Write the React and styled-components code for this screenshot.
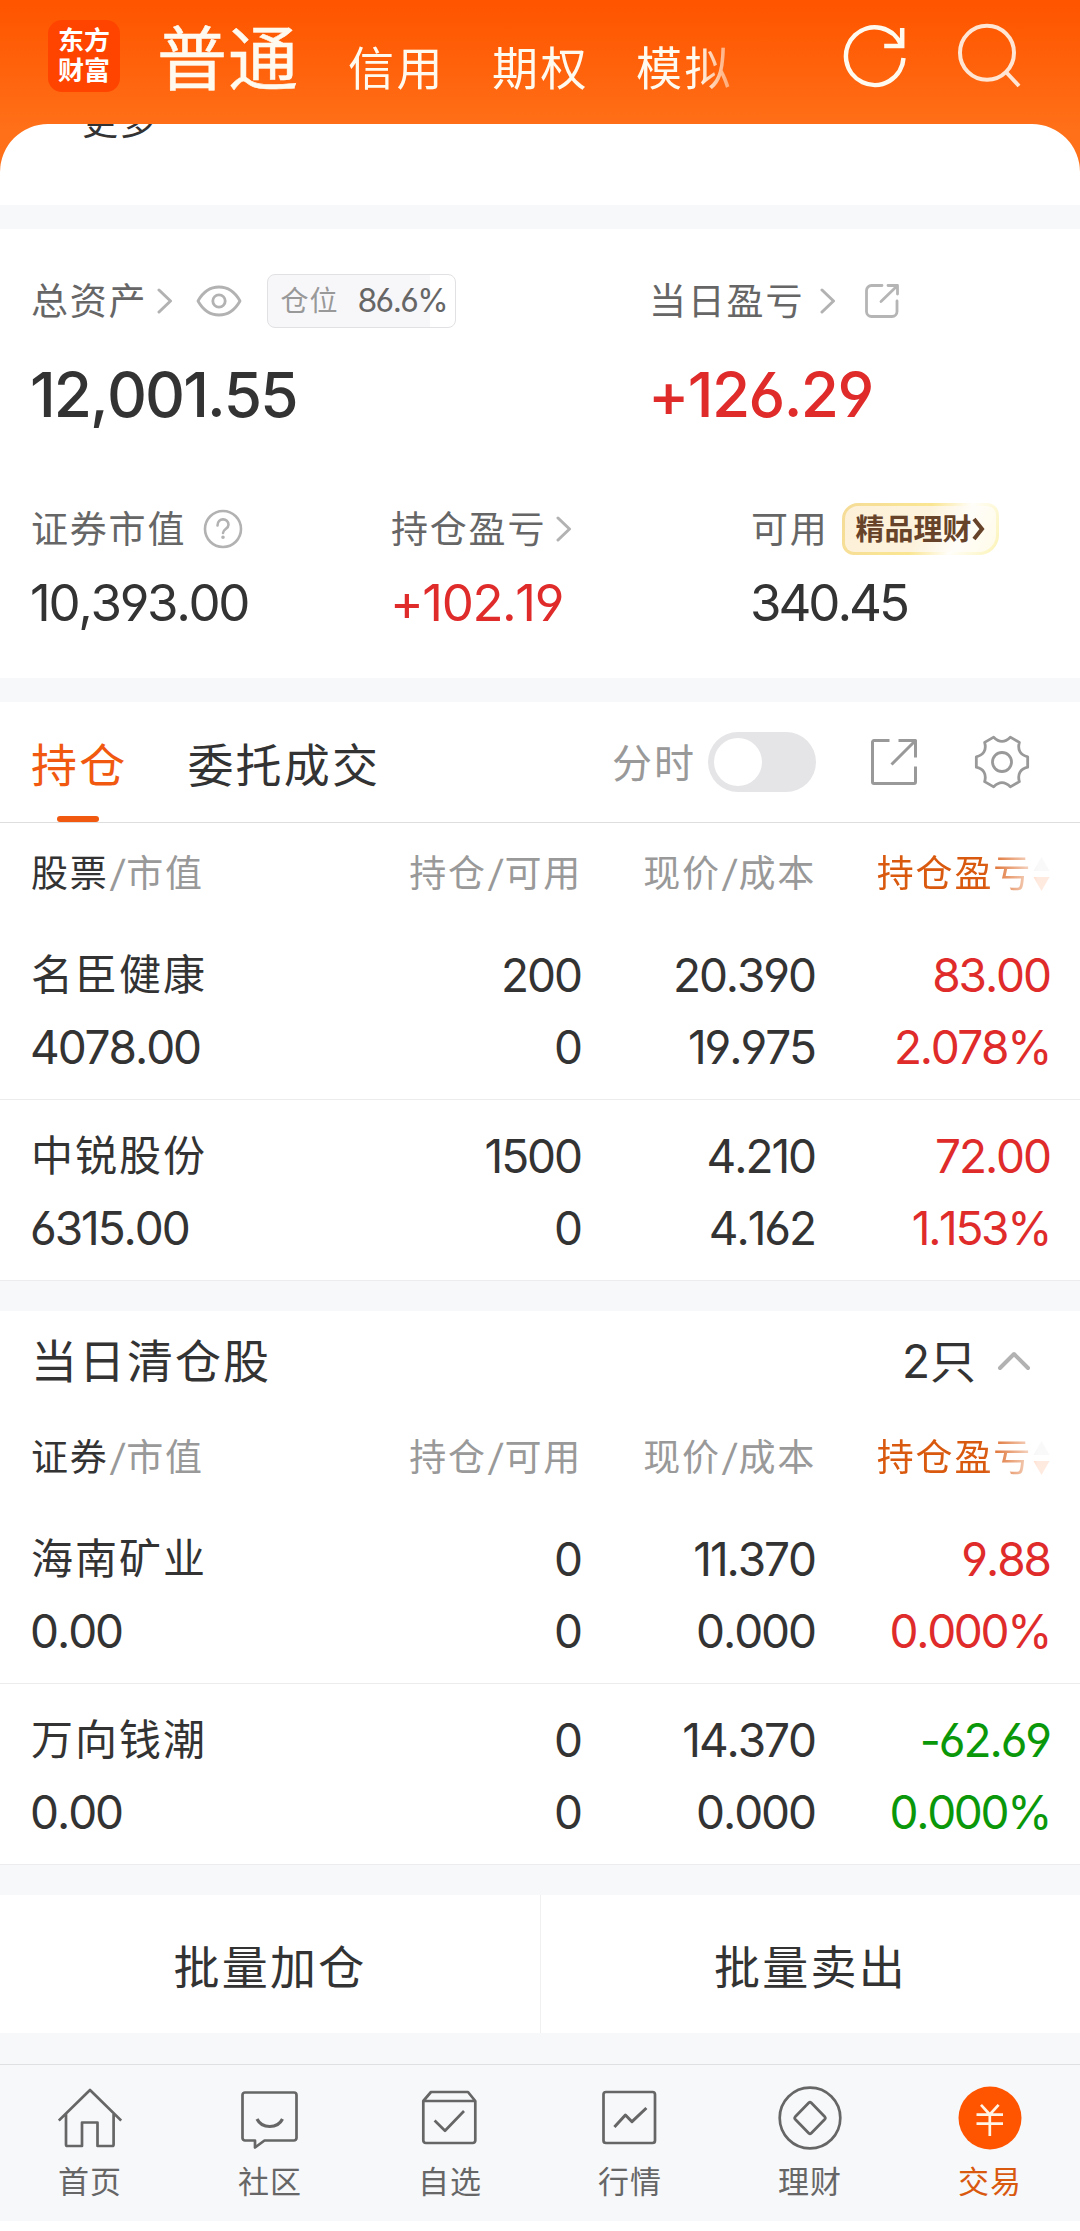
import React from 'react';
import styled, { createGlobalStyle } from 'styled-components';

const Global = createGlobalStyle`
  * { box-sizing: border-box; }
  body {
    margin: 0;
    background: #fff;
    color: #333;
    font-family: Inter, "Noto Sans CJK SC", sans-serif;
    font-feature-settings: "cv03", "cv04";
    font-kerning: none;
  }
  svg { display: block; flex: none; }
`;

const Page = styled.div`
  width: 1080px;
  height: 2231px;
  overflow: hidden;
  display: flex;
  flex-direction: column;
  > * { flex: none; }
`;

const Top = styled.header`
  height: 205px;
  background: linear-gradient(#ff5400 0, #ff5a04 30px, #ff7018 130px);
`;
const TopBar = styled.div`
  height: 124px;
  display: flex;
  align-items: flex-start;
  padding-left: 48px;
`;
const Logo = styled.div`
  width: 72px;
  height: 72px;
  margin-top: 20px;
  padding-top: 6px;
  border-radius: 14px;
  background: #ff4400;
  color: #fff;
  text-align: center;
  font-size: 26px;
  font-weight: 700;
  line-height: 30px;
`;
const TopTabs = styled.nav`
  display: flex;
  align-items: baseline;
  width: 600px;
  margin-left: 37px;
  padding-top: 14px;
  color: #fffaf0;
  white-space: nowrap;
  mask-image: linear-gradient(to right, #000 540px, transparent 600px);
`;
const TopTab = styled.span`
  font-size: ${p => (p.$active ? 70 : 46)}px;
  line-height: 92px;
  letter-spacing: ${p => (p.$active ? 1 : 2.5)}px;
  margin-right: ${p => (p.$active ? 49 : 47)}px;
  -webkit-text-stroke: ${p => (p.$active ? '0.5px #fffaf0' : '0')};
`;
const TopIcons = styled.div`
  display: flex;
  align-items: flex-start;
  gap: 50px;
  margin: 22px 0 0 86px;
`;
const Sheet = styled.div`
  height: 81px;
  padding-left: 82px;
  overflow: hidden;
  border-radius: 48px 48px 0 0;
  background: #fff;
`;
const More = styled.div`
  margin-top: -29px;
  font-size: 36px;
  line-height: 54px;
  letter-spacing: 1.5px;
`;
const Gap = styled.div`
  height: ${p => p.$h}px;
  background: #f7f8fa;
`;

const Assets = styled.section`
  height: 449px;
  padding: 42px 0 0 31px;
`;
const AssetRow = styled.div`
  display: grid;
  grid-template-columns: ${p => p.$cols};
  margin-bottom: ${p => p.$mb || 0}px;
`;
const Label = styled.div`
  display: flex;
  align-items: center;
  height: 60px;
  color: #666;
  font-size: 37px;
  letter-spacing: 1.8px;
  line-height: 60px;
  white-space: nowrap;
`;
const LabelText = styled.span`
  padding-top: 1px;
`;
const Slot = styled.span`
  display: flex;
  margin-left: ${p => p.$l}px;
`;
const tone = { up: '#e02b2b', down: '#0a980a' };
const Value = styled.div`
  height: ${p => (p.$big ? 76 : 60)}px;
  margin-top: ${p => (p.$big ? 26 : 14)}px;
  line-height: ${p => (p.$big ? 76 : 60)}px;
  font-size: ${p => (p.$big ? 62 : 51)}px;
  font-weight: ${p => (p.$big ? 500 : 400)};
  letter-spacing: ${p => p.$ls}em;
  margin-left: -1px;
  color: ${p => tone[p.$tone] || '#333'};
`;
const Ratio = styled.div`
  display: flex;
  align-items: center;
  width: 189px;
  height: 54px;
  margin-left: 25px;
  padding-left: 12px;
  border: 1px solid #e1e1e3;
  border-radius: 8px;
  background: linear-gradient(to right, #f7f7fa 86.6%, #fff 86.6%);
  font-size: 28px;
  letter-spacing: 1px;
  line-height: 52px;
  color: #999;
`;
const RatioValue = styled.span`
  margin-left: 19px;
  font-size: 32px;
  letter-spacing: -0.05em;
  color: #666;
`;
const Promo = styled.div`
  display: flex;
  align-items: center;
  width: 157px;
  height: 52px;
  margin-left: 13px;
  padding-left: 11px;
  border: 3px solid transparent;
  border-radius: 16px 12px 20px 12px;
  background:
    linear-gradient(115deg, #fdf0d8 0%, #fdf3dc 50%, #fffdf8 75%, #fffbe9 100%) padding-box,
    linear-gradient(115deg, #f5dc98 0%, #fae692 50%, #fffefa 72%, #fcf3b4 100%) border-box;
  color: #67432a;
  font-size: 29px;
  font-weight: 700;
  letter-spacing: 0;
  line-height: 46px;
`;
const PromoText = styled.span`
  padding-top: 2px;
`;

const TabBar = styled.div`
  display: flex;
  align-items: center;
  height: 121px;
  padding-left: 31px;
  border-bottom: 1px solid #dededf;
`;
const Tab = styled.div`
  display: flex;
  flex-direction: column;
  align-items: center;
  height: 120px;
  padding-top: 33px;
  margin-right: 60px;
  font-size: 46px;
  line-height: 60px;
  letter-spacing: 2.2px;
  color: ${p => (p.$active ? '#f0590f' : '#333')};
  &::after {
    content: '';
    width: 42px;
    height: 6px;
    margin: auto 2px 0 0;
    border-radius: 3px;
    background: ${p => (p.$active ? '#f0590f' : 'transparent')};
  }
`;
const Tools = styled.div`
  display: flex;
  align-items: center;
  margin-left: auto;
  padding-right: 50px;
  color: #999;
  font-size: 40px;
  letter-spacing: 2px;
  line-height: 60px;
`;
const ToolLabel = styled.span`
  padding-top: 3px;
`;
const Switch = styled.div`
  width: 108px;
  height: 60px;
  margin: 0 55px 0 12px;
  padding: 6px;
  border-radius: 30px;
  background: #e5e5e7;
  &::before {
    content: '';
    display: block;
    width: 48px;
    height: 48px;
    border-radius: 50%;
    background: #fff;
  }
`;

const Line = styled.div`
  display: grid;
  grid-template-columns: 550px 234px 235px;
  padding-left: 31px;
  text-align: right;
  white-space: nowrap;
`;
const HeadLine = styled(Line)`
  height: 96px;
  padding: 21px 0 0 31px;
  grid-template-columns: 551px 234px 234px;
  font-size: 37px;
  line-height: 60px;
  letter-spacing: 1.8px;
  color: #999;
`;
const HeadFirst = styled.span`
  display: flex;
  justify-content: space-between;
  b { font-weight: 400; color: #333; }
`;
const Slash = styled.span`
  display: inline-block;
  margin: 0 0.5px 0 2px;
  transform: skewX(-7deg);
`;
const SortHead = styled.span`
  display: flex;
  align-items: center;
  justify-content: flex-end;
  gap: 1px;
  height: 60px;
  color: #d9590f;
  mask-image: linear-gradient(to right, #000 168px, rgba(0, 0, 0, 0.12) 222px);
`;
const StockRow = styled.div`
  height: 181px;
  padding-top: 20px;
  border-bottom: 1px solid #ececee;
`;
const StockLine = styled(Line)`
  height: 72px;
  font-size: 46px;
  line-height: 72px;
  letter-spacing: -0.045em;
`;
const FirstCell = styled.span`
  display: flex;
  justify-content: space-between;
`;
const Amount = styled.span`
  margin-left: -1px;
`;
const StockName = styled.span`
  font-size: 42px;
  letter-spacing: 2px;
`;
const Gain = styled.span`
  color: ${p => tone[p.$tone]};
  letter-spacing: ${p => (p.$rate ? '-0.051em' : 'inherit')};
`;

const CloseHead = styled.div`
  display: flex;
  align-items: center;
  justify-content: space-between;
  height: 96px;
  padding: 3px 49px 0 31px;
  font-size: 46px;
  line-height: 60px;
  letter-spacing: 2px;
`;
const Count = styled.span`
  display: flex;
  align-items: center;
  letter-spacing: 0;
  svg { margin-left: 21px; }
`;

const Actions = styled.div`
  display: grid;
  grid-template-columns: 1fr 1fr;
  height: 138px;
`;
const Action = styled.button`
  border: 0;
  border-left: ${p => (p.$divided ? '1px solid #f0f0f2' : '0')};
  padding: 0 0 1px;
  background: #fff;
  color: #333;
  font: inherit;
  font-size: 46px;
  letter-spacing: 2.2px;
`;

const BottomNav = styled.nav`
  display: grid;
  grid-template-columns: repeat(6, 1fr);
  height: 157px;
  border-top: 1px solid #dfe0e2;
  background: #f7f8fa;
`;
const NavItem = styled.div`
  display: flex;
  flex-direction: column;
  align-items: center;
  padding-top: 21px;
  font-size: 31px;
  line-height: 40px;
  letter-spacing: 1px;
  color: ${p => (p.$active ? '#d9590f' : '#666')};
  svg { margin-right: 1px; }
  span { margin-top: 12px; }
`;

const Chevron = () => (
  <svg width="16" height="26" viewBox="0 0 16 26" fill="none" stroke="#b2b2b2" strokeWidth="3" strokeLinecap="round" strokeLinejoin="round">
    <path d="M2 2 13.5 13 2 24" />
  </svg>
);
const Eye = () => (
  <svg width="46" height="32" viewBox="0 0 46 32" fill="none" stroke="#b2b2b2" strokeWidth="2.8">
    <path d="M2 16C7 7 14 2 23 2s16 5 21 14C39 25 32 30 23 30S7 25 2 16Z" strokeLinejoin="round" />
    <circle cx="23" cy="16" r="6.2" />
  </svg>
);
const Help = () => (
  <svg width="40" height="40" viewBox="0 0 40 40" fill="none" stroke="#b2b2b2" strokeWidth="2.6" strokeLinecap="round">
    <circle cx="20" cy="20" r="18" />
    <path d="M14.5 16.5c0-8 11-8 11-.8 0 4.3-5.5 4.3-5.5 8.3" />
    <circle cx="20" cy="28.3" r="1" fill="#b2b2b2" strokeWidth="1.6" />
  </svg>
);
const ShareSmall = () => (
  <svg width="34" height="34" viewBox="0 0 34 34" fill="none" stroke="#b5b5b5" strokeWidth="2.8" strokeLinecap="round" strokeLinejoin="round">
    <path d="M17 1.5H6.5a5 5 0 0 0-5 5v21a5 5 0 0 0 5 5H27a5 5 0 0 0 5-5V17M23 1.5h9.5V10M32 2 16 17.5" />
  </svg>
);
const ShareLarge = () => (
  <svg width="46" height="46" viewBox="0 0 46 46" fill="none" stroke="#999" strokeWidth="3" strokeLinejoin="round">
    <path d="M18.5 1.5H3A1.5 1.5 0 0 0 1.5 3v40A1.5 1.5 0 0 0 3 44.5h40a1.5 1.5 0 0 0 1.5-1.5V27.5M27.5 1.5h17v17M44 2 20.5 25.5" />
  </svg>
);
const polar = (r, deg) => {
  const a = (deg * Math.PI) / 180;
  return `${(28 + r * Math.cos(a)).toFixed(2)} ${(28 + r * Math.sin(a)).toFixed(2)}`;
};
const gearPath = [0, 60, 120, 180, 240, 300]
  .map((a, i) => `${i ? 'L' : 'M'}${polar(26.2, a - 11.5)}L${polar(26.2, a + 11.5)}Q${polar(16.5, a + 30)} ${polar(26.2, a + 48.5)}`)
  .join('') + 'Z';
const Gear = () => (
  <svg width="56" height="56" viewBox="0 0 56 56" fill="none" stroke="#999" strokeWidth="2.8" strokeLinejoin="round">
    <path d={gearPath} />
    <circle cx="28" cy="28" r="9.5" />
  </svg>
);
const Refresh = () => (
  <svg width="64" height="70" viewBox="0 0 64 70" fill="none" stroke="#fffaf0" strokeWidth="4.5">
    <path d="M58.5 23.5A28.8 28.8 0 1 0 60.5 36" />
    <path d="M59.2 6v18h-18" />
  </svg>
);
const Search = () => (
  <svg width="64" height="68" viewBox="0 0 64 68" fill="none" stroke="#ffe5d3" strokeWidth="4">
    <circle cx="30" cy="30.7" r="27" />
    <path d="M49 50 62 64" />
  </svg>
);
const SortArrows = () => (
  <svg width="17" height="36" viewBox="0 0 17 36">
    <path d="M8.5 1 16.5 15H.5Z" fill="#ccc" />
    <path d="M8.5 35 16.5 21H.5Z" fill="#ff5500" />
  </svg>
);

const navIcons = {
  home: <path d="M.8 34.5 32 4l31.2 30.5M8 28v30.5A1.5 1.5 0 0 0 9.500 60H24V36.5h15.5V60h14.6a1.5 1.5 0 0 0 1.5-1.5V28" />,
  social: (
    <>
      <path d="M7 6.5h49A2.5 2.5 0 0 1 58.5 9v43a2.5 2.5 0 0 1-2.5 2.5H26.5L17 61.5v-7H7A2.5 2.5 0 0 1 4.5 52V9A2.5 2.5 0 0 1 7 6.5Z" />
      <path d="M19 33c5 10 20.5 10 25.5 0" strokeWidth="3.2" />
    </>
  ),
  picks: <path d="M5.3 15 13 6h37l7.3 9v39.5a2.5 2.5 0 0 1-2.5 2.5h-47a2.5 2.5 0 0 1-2.5-2.5ZM5.3 15h52M16.6 34.5 27 44.7 46 25" />,
  market: (
    <>
      <rect x="5.5" y="6" width="51.5" height="51" rx="2.5" />
      <path d="m16.4 41 11-12 6.6 6.7L48.4 22" strokeWidth="3" />
    </>
  ),
  wealth: (
    <>
      <circle cx="32" cy="32" r="30.3" />
      <path d="m33.2 16.8 13.6 14a1.8 1.8 0 0 1 0 2.4l-13.6 14a1.8 1.8 0 0 1-2.4 0l-13.6-14a1.8 1.8 0 0 1 0-2.4l13.6-14a1.8 1.8 0 0 1 2.4 0Z" />
    </>
  ),
  trade: (
    <>
      <circle cx="32" cy="32" r="31.5" fill="#ff5500" stroke="none" />
      <path d="m23 18.8 8.8 9.7 8.8-9.7M18.5 28.7H45M18.5 37.7H45M31.8 28.5V50" stroke="#fff4e6" />
    </>
  ),
};
const navItems = [
  ['home', '首页'], ['social', '社区'], ['picks', '自选'],
  ['market', '行情'], ['wealth', '理财'], ['trade', '交易'],
];

const holdings = [
  { name: '名臣健康', value: '4078.00', held: '200', free: '0', price: '20.390', cost: '19.975', gain: '83.00', rate: '2.078%', tone: 'up' },
  { name: '中锐股份', value: '6315.00', held: '1500', free: '0', price: '4.210', cost: '4.162', gain: '72.00', rate: '1.153%', tone: 'up' },
];
const closed = [
  { name: '海南矿业', value: '0.00', held: '0', free: '0', price: '11.370', cost: '0.000', gain: '9.88', rate: '0.000%', tone: 'up' },
  { name: '万向钱潮', value: '0.00', held: '0', free: '0', price: '14.370', cost: '0.000', gain: '-62.69', rate: '0.000%', tone: 'down' },
];

const TableHead = ({ first }) => (
  <HeadLine>
    <HeadFirst><span><b>{first}</b><Slash>/</Slash>市值</span><span>持仓<Slash>/</Slash>可用</span></HeadFirst>
    <span>现价<Slash>/</Slash>成本</span>
    <SortHead>持仓盈亏<SortArrows /></SortHead>
  </HeadLine>
);
const Stock = ({ s }) => (
  <StockRow>
    <StockLine>
      <FirstCell><StockName>{s.name}</StockName><span>{s.held}</span></FirstCell>
      <span>{s.price}</span>
      <Gain $tone={s.tone}>{s.gain}</Gain>
    </StockLine>
    <StockLine>
      <FirstCell><Amount>{s.value}</Amount><span>{s.free}</span></FirstCell>
      <span>{s.cost}</span>
      <Gain $tone={s.tone} $rate>{s.rate}</Gain>
    </StockLine>
  </StockRow>
);

export default function App() {
  return (
    <Page>
      <Global />
      <Top>
        <TopBar>
          <Logo>东方<br />财富</Logo>
          <TopTabs>
            <TopTab $active>普通</TopTab>
            <TopTab>信用</TopTab>
            <TopTab>期权</TopTab>
            <TopTab>模拟</TopTab>
          </TopTabs>
          <TopIcons><Refresh /><Search /></TopIcons>
        </TopBar>
        <Sheet><More>更多</More></Sheet>
      </Top>
      <Gap $h={24} />
      <Assets>
        <AssetRow $cols="618px 1fr" $mb={66}>
          <div>
            <Label>
              <LabelText>总资产</LabelText>
              <Slot $l={10}><Chevron /></Slot>
              <Slot $l={23}><Eye /></Slot>
              <Ratio>仓位<RatioValue>86.6%</RatioValue></Ratio>
            </Label>
            <Value $big $ls={-0.031}>12,001.55</Value>
          </div>
          <div>
            <Label>
              <LabelText>当日盈亏</LabelText>
              <Slot $l={16}><Chevron /></Slot>
              <Slot $l={29}><ShareSmall /></Slot>
            </Label>
            <Value $big $ls={-0.026} $tone="up">+126.29</Value>
          </div>
        </AssetRow>
        <AssetRow $cols="360px 360px 1fr">
          <div>
            <Label><LabelText>证券市值</LabelText><Slot $l={17}><Help /></Slot></Label>
            <Value $ls={-0.046}>10,393.00</Value>
          </div>
          <div>
            <Label><LabelText>持仓盈亏</LabelText><Slot $l={10}><Chevron /></Slot></Label>
            <Value $ls={-0.028} $tone="up">+102.19</Value>
          </div>
          <div>
            <Label>
              <LabelText>可用</LabelText>
              <Promo>
                <PromoText>精品理财</PromoText>
                <svg width="13" height="24" viewBox="0 0 13 24" fill="none" stroke="#67432a" strokeWidth="4">
                  <path d="m2 2 8 10-8 10" />
                </svg>
              </Promo>
            </Label>
            <Value $ls={-0.06}>340.45</Value>
          </div>
        </AssetRow>
      </Assets>
      <Gap $h={24} />
      <TabBar>
        <Tab $active>持仓</Tab>
        <Tab>委托成交</Tab>
        <Tools>
          <ToolLabel>分时</ToolLabel>
          <Switch />
          <ShareLarge />
          <Slot $l={57}><Gear /></Slot>
        </Tools>
      </TabBar>
      <TableHead first="股票" />
      {holdings.map(s => <Stock key={s.name} s={s} />)}
      <Gap $h={30} />
      <CloseHead>
        当日清仓股
        <Count>
          2只
          <svg width="34" height="20" viewBox="0 0 34 20" fill="none" stroke="#b2b2b2" strokeWidth="4" strokeLinecap="round" strokeLinejoin="round">
            <path d="M3 17 17 3l14 14" />
          </svg>
        </Count>
      </CloseHead>
      <TableHead first="证券" />
      {closed.map(s => <Stock key={s.name} s={s} />)}
      <Gap $h={30} />
      <Actions>
        <Action>批量加仓</Action>
        <Action $divided>批量卖出</Action>
      </Actions>
      <Gap $h={31} />
      <BottomNav>
        {navItems.map(([icon, label]) => (
          <NavItem key={icon} $active={icon === 'trade'}>
            <svg width="64" height="64" viewBox="0 0 64 64" fill="none" stroke="#666" strokeWidth="2.7" strokeLinejoin="round">
              {navIcons[icon]}
            </svg>
            <span>{label}</span>
          </NavItem>
        ))}
      </BottomNav>
    </Page>
  );
}
